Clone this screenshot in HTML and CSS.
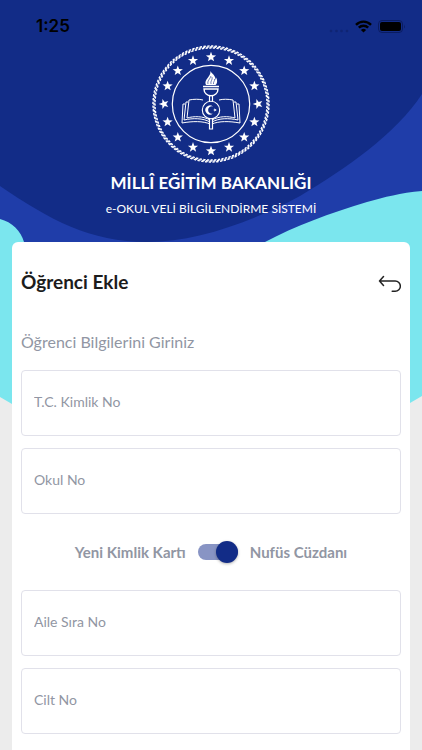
FILE: index.html
```html
<!DOCTYPE html>
<html lang="tr">
<head>
    <meta charset="UTF-8">
    <meta name="viewport" content="width=device-width, initial-scale=1.0">
    <title>e-Okul Veli Bilgilendirme Sistemi</title>
    <link rel="stylesheet" href="styles.css">
</head>
<body>
    <svg class="backdrop" viewBox="0 0 422 420" preserveAspectRatio="none" aria-hidden="true">
        <path fill="#7be6ee" d="M0 0H422V396L410 403Q380 420 340 420H80Q40 420 12 404L0 397Z"/>
        <path fill="#1f3da9" d="M0 0H422V191C400 193 385 197 367 202C330 213 295 226 265 242V260H24V242C21 231 12 222 0 219Z"/>
        <path fill="#122c87" d="M0 0H422V94C396 134 345 169 300 196C250 223 195 242 147 242C90 242 50 220 0 186Z"/>
    </svg>

    <div class="status-bar">
        <span class="time">1:25</span>
        <div class="status-icons">
            <svg class="signal" width="20" height="4" viewBox="0 0 20 4" fill="#0f2473">
                <circle cx="2" cy="2" r="1.3"/><circle cx="7.500" cy="2" r="1.3"/><circle cx="12.500" cy="2" r="1.3"/><circle cx="18" cy="2" r="1.3"/>
            </svg>
            <svg width="17" height="13" viewBox="0 0 17 13" fill="none" stroke="#000" stroke-width="2.400">
                <path d="M1 4.800a10.500 10.500 0 0 1 15 0"/>
                <path d="M3.800 7.700a6.600 6.600 0 0 1 9.400 0"/>
                <path fill="#000" stroke="none" d="M8.500 12.600 5.900 10a3.700 3.700 0 0 1 5.200 0Z"/>
            </svg>
            <svg width="28" height="13" viewBox="0 0 28 13">
                <rect x=".5" y=".5" width="24" height="12" rx="3.500" fill="none" stroke="#0a1c60"/>
                <rect x="2" y="2" width="21" height="9" rx="2" fill="#000"/>
                <path d="M26 4.500q1.500 2 0 4Z" fill="#0a1c60"/>
            </svg>
        </div>
    </div>

    <header class="page-header">
        <svg class="emblem" viewBox="-60 -60 120 120" fill="none" stroke="#fff">
            <defs>
                <path id="star" fill="#fff" stroke="none" d="M0-5.300 1.300-1.700 5.100-1.600 2.100.7 3.100 4.300 0 2.200-3.100 4.300-2.100.7-5.100-1.600-1.300-1.700Z"/>
            </defs>
            <g stroke-width="1.400" stroke-dasharray=".62 .38">
                <circle r="58" pathLength="96"/>
                <circle r="57" pathLength="96" stroke-dashoffset=".25"/>
                <circle r="56" pathLength="96" stroke-dashoffset=".5"/>
            </g>
            <circle r="38.700" stroke-width="1.200"/>
            <use href="#star" x="0" y="-47"/>
            <use href="#star" x="18" y="-43.400"/>
            <use href="#star" x="33.200" y="-33.200"/>
            <use href="#star" x="43.400" y="-18"/>
            <use href="#star" transform="translate(47 0) rotate(-90)"/>
            <use href="#star" x="43.400" y="18"/>
            <use href="#star" x="33.200" y="33.200"/>
            <use href="#star" x="18" y="43.400"/>
            <use href="#star" x="0" y="47"/>
            <use href="#star" x="-18" y="43.400"/>
            <use href="#star" x="-33.200" y="33.200"/>
            <use href="#star" x="-43.400" y="18"/>
            <use href="#star" transform="translate(-47 0) rotate(-90)"/>
            <use href="#star" x="-43.400" y="-18"/>
            <use href="#star" x="-33.200" y="-33.200"/>
            <use href="#star" x="-18" y="-43.400"/>
            <!-- book -->
            <g stroke-width="1">
                <path d="M-8-4C-12-5-17-5-22-4L-24 14C-17 12-8 12-1 16M8-4C12-5 17-5 22-4L24 14C17 12 8 12 1 16"/>
                <path d="M-23-2H-25L-27 16C-18 14-8 14-1 18M23-2H25L27 16C18 14 8 14 1 18"/>
                <path d="M-26 0H-28L-29 19C-18 17-8 17-1 20M26 0H28L29 19C18 17 8 17 1 20"/>
            </g>
            <!-- torch -->
            <path fill="#fff" stroke="none" d="M-1-33C3-29 5-27 4.500-24 5-25 5.500-26 5-27 7-23 6-20 4.500-19H-5C-7-23-3-26-2-28-1-30 0-31-1-33Z"/>
            <path stroke="#122c87" stroke-width=".6" d="M-3-20C-4-23-1-25 0-28M0-20C-1-23 2-24 1-27M2.500-20C2-22 4-23 3.500-25"/>
            <path d="M-8-17.500H8M-7-15C-7-6 7-6 7-15Z" stroke-width="1.400"/>
            <path d="M-1.500-9V-2M1.500-9V-2M-1.500 14V25H1.500V14" stroke-width="1.200"/>
            <circle cy="6" r="8.700" fill="#122c87" stroke-width="1.100"/>
            <path fill="#fff" stroke="none" d="M2 2.500A4.600 4.600 0 1 0 2 9.500 3.700 3.700 0 1 1 2 2.500Z"/>
            <use href="#star" transform="translate(4 6) rotate(-90) scale(.36)"/>
        </svg>
        <h1>MİLLÎ EĞİTİM BAKANLIĞI</h1>
        <p>e-OKUL VELİ BİLGİLENDİRME SİSTEMİ</p>
    </header>

    <main class="card">
        <div class="card-header">
            <h2>Öğrenci Ekle</h2>
            <button type="button" class="back-button" aria-label="Geri">
                <svg width="24" height="18" viewBox="0 0 24 18" fill="none" stroke="#222" stroke-width="1.500" stroke-linecap="round" stroke-linejoin="round">
                    <path d="M6.500 1.500 2.500 6l4 4.500M2.500 6H18.200a5 5 0 0 1 0 10.300h-3"/>
                </svg>
            </button>
        </div>
        <form>
            <p class="form-title">Öğrenci Bilgilerini Giriniz</p>
            <input type="text" class="field" placeholder="T.C. Kimlik No" aria-label="T.C. Kimlik No">
            <input type="text" class="field" placeholder="Okul No" aria-label="Okul No">
            <div class="switch-row">
                <label for="cardType">Yeni Kimlik Kartı</label>
                <input type="checkbox" id="cardType" class="switch" checked>
                <label for="cardType">Nufüs Cüzdanı</label>
            </div>
            <input type="text" class="field" placeholder="Aile Sıra No" aria-label="Aile Sıra No">
            <input type="text" class="field" placeholder="Cilt No" aria-label="Cilt No">
        </form>
    </main>
</body>
</html>
```
FILE: styles.css
```css
* {
    margin: 0;
    padding: 0;
    box-sizing: border-box;
    font-family: Lato, 'Noto Sans', sans-serif;
}

body {
    position: relative;
    min-height: 100vh;
    background: #ececec;
}

.backdrop {
    position: absolute;
    top: 0;
    left: 0;
    z-index: -1;
    width: 100%;
    height: 420px;
}

.status-bar {
    display: flex;
    justify-content: space-between;
    align-items: center;
    height: 44px;
    padding: 8px 16px 0 36px;
}

.time {
    font-family: Inter, sans-serif;
    font-size: 17px;
    font-weight: 600;
    color: #000;
}

.status-icons {
    display: flex;
    align-items: center;
    gap: 6px;
}

.signal {
    align-self: flex-end;
}

.page-header {
    display: flex;
    flex-direction: column;
    align-items: center;
    height: 198px;
    color: white;
    text-align: center;
}

.emblem {
    width: 120px;
    height: 120px;
}

.page-header h1 {
    margin-top: 7px;
    font-size: 17px;
    line-height: 24px;
}

.page-header p {
    margin-top: 4px;
    font-size: 12px;
    line-height: 20px;
}

.card {
    min-height: calc(100vh - 242px);
    margin: 0 12px;
    padding: 24px 9px 16px;
    background: white;
    border-radius: 6px 6px 0 0;
}

.card-header {
    display: flex;
    justify-content: space-between;
    align-items: center;
    height: 32px;
}

.card-header h2 {
    font-size: 19px;
    line-height: 32px;
    color: #1c1c1c;
}

.back-button {
    height: 18px;
    margin-top: 4px;
    background: none;
    border: none;
    cursor: pointer;
}

.form-title {
    margin: 32px 0 16px;
    font-size: 16px;
    line-height: 24px;
    color: #9196a3;
}

.field {
    display: block;
    width: 100%;
    height: 66px;
    margin-bottom: 12px;
    padding: 0 12px 4px;
    font-size: 14px;
    color: #333;
    background: white;
    border: 1px solid #e1e1ea;
    border-radius: 4px;
}

.field::placeholder {
    color: #9196a3;
}

.field:focus {
    outline: none;
    border-color: #122c87;
}

.switch-row {
    display: flex;
    justify-content: center;
    align-items: center;
    gap: 12px;
    height: 64px;
    padding-bottom: 12px;
    font-size: 15px;
    font-weight: bold;
    color: #9196a3;
}

.switch {
    display: flex;
    align-items: center;
    justify-content: flex-end;
    width: 40px;
    height: 16px;
    background: #8894c4;
    border-radius: 8px;
    appearance: none;
    cursor: pointer;
}

.switch::before {
    content: "";
    width: 22px;
    height: 22px;
    flex-shrink: 0;
    background: #122c87;
    border-radius: 50%;
    box-shadow: 0 1px 3px rgba(0, 0, 0, 0.3);
}

.switch:not(:checked) {
    justify-content: flex-start;
}
```
